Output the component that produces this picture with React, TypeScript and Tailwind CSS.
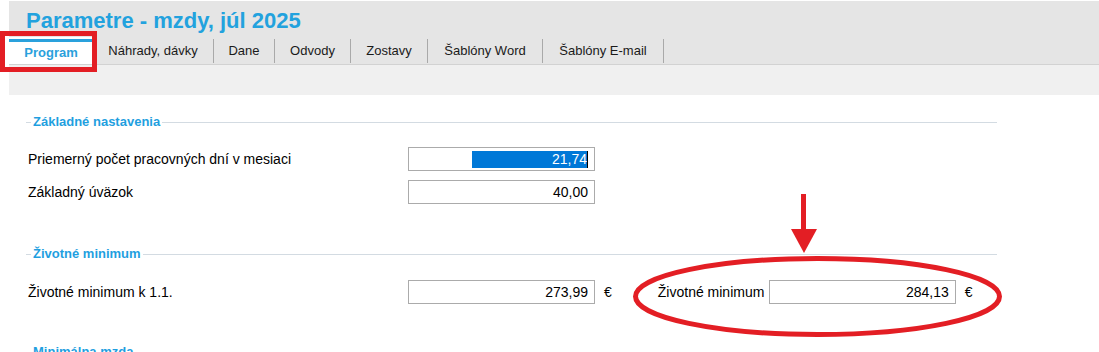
const tabs = [
  { label: "Náhrady, dávky", w: "w-[121px]" },
  { label: "Dane", w: "w-[61px]" },
  { label: "Odvody", w: "w-[76px]" },
  { label: "Zostavy", w: "w-[77px]" },
  { label: "Šablóny Word", w: "w-[115px]" },
  { label: "Šablóny E-mail", w: "w-[121px]" },
];

const SectionHeading = ({ title, className }: { title: string; className?: string }) => (
  <div className={`flex items-center h-[16px] ${className ?? ""}`}>
    <span className="w-[5px] h-px bg-[#d3dbe2]" />
    <span className="px-[2px] text-[13px] font-bold text-[#1f9fdf] leading-[16px]">{title}</span>
    <span className="flex-1 h-px bg-[#d3dbe2]" />
  </div>
);

const NumberBox = ({ value, selected }: { value: string; selected?: boolean }) => (
  <div className="w-[187px] h-[24px] border border-[#ababab] bg-white flex items-center justify-end pr-[6px] text-[14px]">
    {selected ? (
      <span className="flex items-center">
        <span className="w-[115px] h-[17px] bg-[#0078d7] text-white text-right leading-[17px]">{value}</span>
        <span className="w-px h-[17px] bg-black" />
      </span>
    ) : (
      <span>{value}</span>
    )}
  </div>
);

const Row = ({ label, children, className }: { label: string; children: React.ReactNode; className?: string }) => (
  <div className={`flex items-center h-[24px] ${className ?? ""}`}>
    <span className="w-[382px] pl-[2px] text-[14px]">{label}</span>
    {children}
  </div>
);

export default function App() {
  return (
    <div className="relative w-[1099px] h-[352px] overflow-hidden bg-white text-black font-['Liberation_Sans',Arial,sans-serif]">
      {/* header */}
      <div className="ml-[9px] mt-px h-[64px] bg-[#e5e5e5] border-b border-[#d2d2d2] flex flex-col">
        <h1 className="pl-[17px] pt-[8px] text-[22px] leading-[24px] font-bold text-[#22a2de]">Parametre - mzdy, júl 2025</h1>
        <div className="mt-[4px] flex items-end h-[27px]">
          <div className="w-[84px] h-[27px] bg-white flex flex-col pt-[2px]">
            <span className="h-[3px] bg-[#2aa1dc]" />
            <span className="flex-1 flex items-center justify-center text-[13px] font-bold text-[#2aa1dc]">Program</span>
          </div>
          {tabs.map((t) => (
            <div key={t.label} className={`${t.w} h-[24px] mb-px border-r border-[#a9a9a9] flex items-center justify-center text-[13px] text-[#1a1a1a]`}>
              {t.label}
            </div>
          ))}
        </div>
      </div>
      <div className="ml-[9px] h-[30px] bg-[#f0f0f0]" />

      {/* content */}
      <div className="pl-[26px] w-[997px]">
        <SectionHeading title="Základné nastavenia" className="mt-[19px]" />
        <Row label="Priemerný počet pracovných dní v mesiaci" className="mt-[17px]">
          <NumberBox value="21,74" selected />
        </Row>
        <Row label="Základný úväzok" className="mt-[9px]">
          <NumberBox value="40,00" />
        </Row>

        <SectionHeading title="Životné minimum" className="mt-[42px]" />
        <Row label="Životné minimum k 1.1." className="mt-[18px]">
          <NumberBox value="273,99" />
          <span className="ml-[9px] text-[14px]">€</span>
          <span className="ml-[46px] w-[111px] text-[14px]">Životné minimum</span>
          <NumberBox value="284,13" />
          <span className="ml-[9px] text-[14px]">€</span>
        </Row>

        <SectionHeading title="Minimálna mzda" className="mt-[40px]" />
      </div>

      {/* annotations */}
      <div className="absolute left-0 top-[31px] w-[97px] h-[41px] border-[5px] border-[#e31e24] pointer-events-none" />
      <svg className="absolute inset-0 pointer-events-none" width="1099" height="352" viewBox="0 0 1099 352">
        <rect x="801" y="194" width="5" height="36" fill="#e31e24" />
        <polygon points="791,229 817,229 804,253" fill="#e31e24" />
        <ellipse cx="817.5" cy="296.5" rx="182" ry="38" fill="none" stroke="#e31e24" strokeWidth="5" />
      </svg>
    </div>
  );
}
